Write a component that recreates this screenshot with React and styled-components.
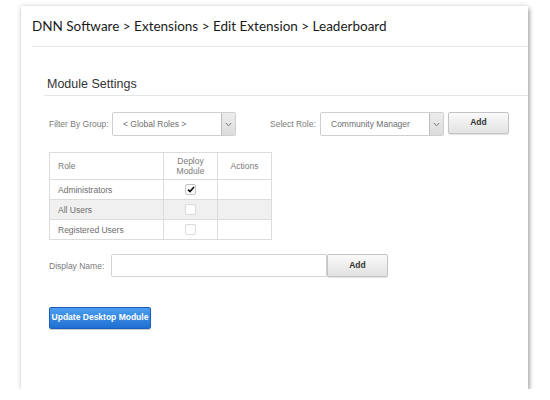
import React from 'react'
import styled, { createGlobalStyle } from 'styled-components'

const GlobalStyle = createGlobalStyle`
  body {
    margin: 0;
    background: #fff;
    font-family: 'Liberation Sans', Arial, sans-serif;
  }
`

const roles = [
  { name: 'Administrators', checked: true },
  { name: 'All Users', checked: false },
  { name: 'Registered Users', checked: false },
]

function App() {
  return (
    <>
      <GlobalStyle />
      <Panel>
        <Breadcrumb>DNN Software &gt; Extensions &gt; Edit Extension &gt; Leaderboard</Breadcrumb>
        <Section>
          <SectionTitle>Module Settings</SectionTitle>
          <Content>
            <FormRow>
              <Label width='63px'>Filter By Group:</Label>
              <Select value='< Global Roles >' />
              <Label width='50px' $gap='34px'>
                Select Role:
              </Label>
              <Select value='Community Manager' />
              <Button>Add</Button>
            </FormRow>

            <Table>
              <colgroup>
                <col style={{ width: 114 }} />
                <col style={{ width: 54 }} />
                <col />
              </colgroup>
              <thead>
                <tr>
                  <Th align='left'>Role</Th>
                  <Th>Deploy<br />Module</Th>
                  <Th>Actions</Th>
                </tr>
              </thead>
              <tbody>
                {roles.map((r, i) => (
                  <Row key={r.name} $alt={i % 2 === 1}>
                    <Td>{r.name}</Td>
                    <Td align='center'>
                      <Check $checked={r.checked}>
                        {r.checked && (
                          <svg width='8' height='7' viewBox='0 0 8 7'>
                            <path d='M1 3.6 L3 5.6 L7 1' fill='none' stroke='#111' strokeWidth='1.7' />
                          </svg>
                        )}
                      </Check>
                    </Td>
                    <Td />
                  </Row>
                ))}
              </tbody>
            </Table>

            <FormRow $top='14px'>
              <Label width='62px'>Display Name:</Label>
              <TextInput />
              <Button $attached>Add</Button>
            </FormRow>

            <PrimaryButton>Update Desktop Module</PrimaryButton>
          </Content>
        </Section>
      </Panel>
    </>
  )
}

function Select({ value }) {
  return (
    <SelectBox>
      <span>{value}</span>
      <Arrow>
        <svg width='7' height='5' viewBox='0 0 7 5'>
          <path d='M0.8 1 L3.5 3.8 L6.2 1' fill='none' stroke='#777' strokeWidth='1' />
        </svg>
      </Arrow>
    </SelectBox>
  )
}

const Panel = styled.div`
  margin: 6px 0 0 21px;
  width: 507px;
  height: 383px;
  background: #fff;
  box-shadow: 0 0 5px rgba(0, 0, 0, 0.18), 2px 3px 4px rgba(0, 0, 0, 0.25);
  overflow: hidden;
`

const Breadcrumb = styled.h1`
  margin: 0 0 0 11px;
  height: 40px;
  line-height: 40px;
  border-bottom: 1px solid #e6e6e6;
  font-family: 'Lato', 'Open Sans', sans-serif;
  font-size: 13.5px;
  font-weight: 400;
  color: #1a1a1a;
`

const Section = styled.div`
  margin: 27px 0 0 23px;
`

const SectionTitle = styled.h2`
  margin: 0;
  padding-left: 3px;
  height: 21px;
  line-height: 21px;
  border-bottom: 1px solid #e6e6e6;
  font-size: 12.5px;
  font-weight: 400;
  color: #333;
`

const Content = styled.div`
  padding-left: 5px;
`

const FormRow = styled.div`
  display: flex;
  align-items: center;
  margin-top: ${(p) => p.$top || '16px'};
`

const Label = styled.span`
  width: ${(p) => p.width};
  margin-left: ${(p) => p.$gap || '0'};
  flex: none;
  font-size: 8.5px;
  color: #7a7a7a;
`

const SelectBox = styled.div`
  width: 124px;
  height: 24px;
  box-sizing: border-box;
  display: flex;
  align-items: stretch;
  border: 1px solid #cfcfcf;
  border-radius: 2px;
  background: #fff;
  font-size: 8.5px;
  color: #6e6e6e;

  span {
    flex: 1;
    display: flex;
    align-items: center;
    padding-left: 10px;
  }
`

const Arrow = styled.div`
  width: 13px;
  display: flex;
  align-items: center;
  justify-content: center;
  background: linear-gradient(#ececec, #dcdcdc);
  border-left: 1px solid #bdbdbd;
`

const Button = styled.button`
  margin-left: ${(p) => (p.$attached ? '0' : '4px')};
  width: 61px;
  height: ${(p) => (p.$attached ? '23px' : '22px')};
  padding: 0 0 2px;
  border: 1px solid #c4c4c4;
  border-radius: 2px;
  background: linear-gradient(#fafafa, #e2e2e2);
  box-shadow: 0 1px 1px rgba(0, 0, 0, 0.12);
  font-family: inherit;
  font-size: 8.5px;
  font-weight: bold;
  color: #333;
  align-self: flex-start;
`

const Table = styled.table`
  margin-top: 16px;
  width: 223px;
  table-layout: fixed;
  border-collapse: collapse;
  font-size: 8.5px;
  color: #6e6e6e;
`

const Th = styled.th`
  height: 26px;
  padding: 0 0 0 ${(p) => (p.align === 'left' ? '8px' : '0')};
  text-align: ${(p) => p.align || 'center'};
  font-weight: 400;
  color: #7a7a7a;
  line-height: 10px;
  border: 1px solid #dcdcdc;
`

const Row = styled.tr`
  background: ${(p) => (p.$alt ? '#f0f0f0' : '#fff')};
`

const Td = styled.td`
  height: 19px;
  padding: 0 0 0 ${(p) => (p.align === 'center' ? '0' : '8px')};
  text-align: ${(p) => p.align || 'left'};
  border: 1px solid #dcdcdc;
  vertical-align: middle;
`

const Check = styled.span`
  display: inline-flex;
  align-items: center;
  justify-content: center;
  width: 9px;
  height: 9px;
  vertical-align: middle;
  border: 1px solid ${(p) => (p.$checked ? '#c4c4c4' : '#dadada')};
  border-radius: 2px;
  background: #fff;
`

const TextInput = styled.div`
  width: 216px;
  height: 23px;
  box-sizing: border-box;
  border: 1px solid #d4d4d4;
  border-radius: 2px 0 0 2px;
  background: #fff;
`

const PrimaryButton = styled.button`
  display: block;
  margin-top: 30px;
  width: 102px;
  height: 22px;
  padding: 0 0 2px;
  border: 1px solid #1b5fb8;
  border-radius: 2px;
  background: linear-gradient(#4c9ef0, #1f6fd2);
  box-shadow: 0 1px 1px rgba(0, 0, 0, 0.2);
  font-family: inherit;
  font-size: 8.5px;
  font-weight: bold;
  color: #fff;
`

export default App
